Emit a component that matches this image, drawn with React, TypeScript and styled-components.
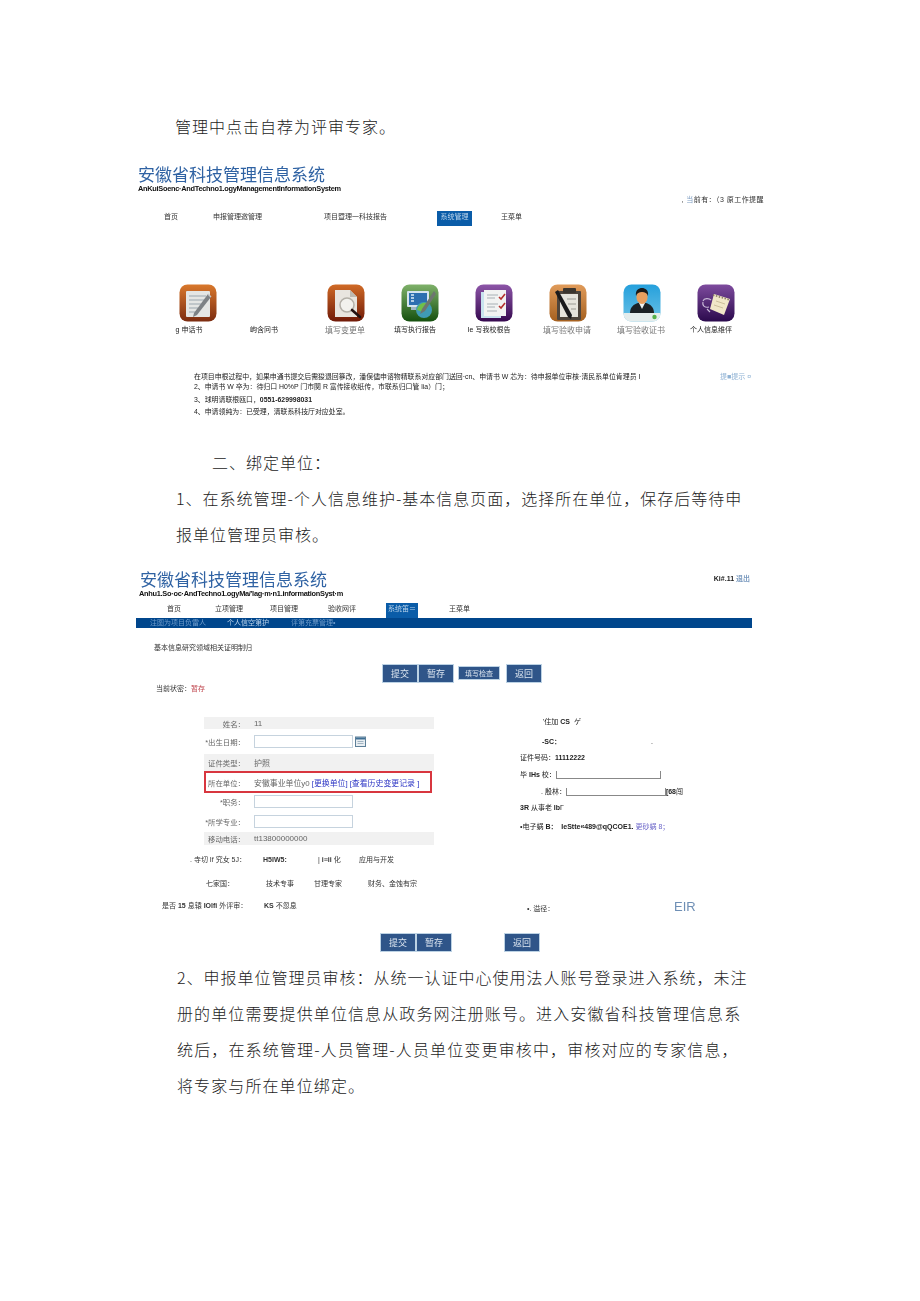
import React from "react";
import styled, { createGlobalStyle } from "styled-components";

const GlobalStyle = createGlobalStyle`
  html, body {
    margin: 0;
    padding: 0;
    background: #fff;
  }
  body {
    font-family: "Liberation Sans", "Noto Sans CJK SC", sans-serif;
  }
`;

const Page = styled.div`
  width: 920px;
  height: 1301px;
  overflow: hidden;
  padding-top: 108px;
  box-sizing: border-box;
  background: #fff;
`;

const Para = styled.div<{ $left: number; $top?: number; $h?: number; $ls?: number }>`
  margin-left: ${(p) => p.$left}px;
  margin-top: ${(p) => p.$top ?? 0}px;
  height: ${(p) => p.$h ?? 36}px;
  line-height: ${(p) => p.$h ?? 36}px;
  font-family: "Noto Sans CJK SC", sans-serif;
  font-weight: 300;
  font-size: 16px;
  letter-spacing: ${(p) => p.$ls ?? 1}px;
  color: #1c1c1c;
  white-space: nowrap;
`;

const Shot = styled.div<{ $left: number; $top: number; $width: number }>`
  margin-left: ${(p) => p.$left}px;
  margin-top: ${(p) => p.$top}px;
  width: ${(p) => p.$width}px;
  filter: blur(0.45px);
  font-size: 7px;
  color: #333;
`;

const Title = styled.div<{ $left?: number }>`
  margin-left: ${(p) => p.$left ?? 1}px;
  height: 20px;
  line-height: 20px;
  font-family: "Noto Sans CJK SC", sans-serif;
  font-size: 17px;
  color: #2f62a3;
  white-space: nowrap;
`;

const Subtitle = styled.div<{ $left?: number; $ls?: number }>`
  margin-left: ${(p) => p.$left ?? 1}px;
  height: 10px;
  line-height: 10px;
  font-size: 7.4px;
  font-weight: 700;
  letter-spacing: ${(p) => p.$ls ?? 0}px;
  color: #111;
  white-space: nowrap;
`;

const Notice = styled.div`
  height: 12px;
  line-height: 12px;
  text-align: right;
  font-size: 7px;
  letter-spacing: 0.45px;
  color: #333;
  white-space: nowrap;
`;

const Dim = styled.span`
  color: #7d9cc0;
`;

const Nav = styled.div<{ $pad: number; $top?: number }>`
  display: flex;
  height: 15px;
  margin-top: ${(p) => p.$top ?? 5}px;
  padding-left: ${(p) => p.$pad}px;
  line-height: 11px;
  font-size: 7px;
  color: #333;
`;

const NavCell = styled.div<{ $w: number }>`
  width: ${(p) => p.$w}px;
  flex: none;
  white-space: nowrap;
`;

const NavActive = styled.div<{ $w: number }>`
  width: ${(p) => p.$w}px;
  height: 15px;
  background: #0a5ca8;
  color: #b9d3ea;
  text-align: center;
`;

const IconGrid = styled.div`
  display: grid;
  grid-template-columns: repeat(8, 74px);
  margin-top: 58px;
  margin-left: 24px;
`;

const IconCell = styled.div`
  display: flex;
  flex-direction: column;
  align-items: center;
  height: 51px;
`;

const IconSlot = styled.div`
  width: 38px;
  height: 38px;
  flex: none;
`;

const IconLabel = styled.div<{ $big?: boolean; $pull?: number }>`
  margin-top: ${(p) => (p.$big ? 4 : 3)}px;
  padding-right: ${(p) => p.$pull ?? 0}px;
  line-height: 10px;
  font-size: ${(p) => (p.$big ? 8 : 7)}px;
  color: ${(p) => (p.$big ? "#777" : "#222")};
  white-space: nowrap;
`;

const TipBlock = styled.div`
  margin-top: 37px;
  margin-left: 57px;
  font-size: 6.9px;
  color: #222;
`;

const TipRow = styled.div`
  display: flex;
  height: 10px;
  line-height: 10px;
  white-space: nowrap;
`;

const TipText = styled.div`
  width: 526px;
  flex: none;
`;

const TipHint = styled.div`
  color: #8fb2d4;
  font-size: 7px;
`;

const TipLine = styled.div<{ $top: number }>`
  height: 10px;
  line-height: 10px;
  margin-top: ${(p) => p.$top}px;
  white-space: nowrap;
`;

const HeaderRow = styled.div`
  display: flex;
  justify-content: space-between;
  padding-right: 2px;
`;

const UserBox = styled.div`
  line-height: 20px;
  font-size: 7px;
  font-weight: 700;
  color: #222;
`;

const SubNav = styled.div`
  display: flex;
  height: 10px;
  padding-left: 14px;
  background: #00468c;
  line-height: 10px;
  font-size: 7px;
  color: #6f9ccb;
`;

const SubItem = styled.div<{ $w: number; $on?: boolean }>`
  width: ${(p) => p.$w}px;
  flex: none;
  white-space: nowrap;
  color: ${(p) => (p.$on ? "#bcd4ec" : "#6f9ccb")};
`;

const Tabs = styled.div`
  margin: 15px 0 0 18px;
  height: 10px;
  line-height: 10px;
  font-size: 7px;
  color: #333;
`;

const ButtonRow = styled.div<{ $top: number; $pad: number; $h: number }>`
  display: flex;
  align-items: center;
  gap: 2px;
  height: ${(p) => p.$h}px;
  margin-top: ${(p) => p.$top}px;
  padding-left: ${(p) => p.$pad}px;
`;

const BlueButton = styled.div<{ $small?: boolean; $gap?: number }>`
  box-sizing: border-box;
  width: ${(p) => (p.$small ? 40 : 34)}px;
  height: ${(p) => (p.$small ? 12 : 17)}px;
  margin-left: ${(p) => p.$gap ?? 0}px;
  display: flex;
  align-items: center;
  justify-content: center;
  background: #2f5589;
  outline: 1px solid #bcd2e4;
  font-size: ${(p) => (p.$small ? 7 : 9)}px;
  color: #dde6f0;
  white-space: nowrap;
`;

const Status = styled.div`
  margin: 3px 0 0 20px;
  height: 10px;
  line-height: 10px;
  font-size: 7px;
  color: #333;
`;

const Red = styled.span`
  color: #c0474f;
`;

const FormArea = styled.div`
  display: flex;
  margin-top: 23px;
  margin-left: 68px;
`;

const LeftTable = styled.div`
  width: 230px;
  flex: none;
  font-size: 7.4px;
  color: #666;
  filter: blur(0.2px);
`;

const FormRow = styled.div<{ $h: number; $shade?: boolean; $marked?: boolean }>`
  display: flex;
  align-items: center;
  box-sizing: border-box;
  height: ${(p) => p.$h}px;
  background: ${(p) => (p.$shade ? "#f1f1f1" : "#fff")};
  border: ${(p) => (p.$marked ? "2px solid #d8363f" : "none")};
  margin-right: ${(p) => (p.$marked ? 2 : 0)}px;
  white-space: nowrap;
`;

const FormLabel = styled.div<{ $marked?: boolean }>`
  width: ${(p) => (p.$marked ? 39 : 41)}px;
  text-align: right;
  flex: none;
`;

const FormValue = styled.div<{ $marked?: boolean }>`
  margin-left: 9px;
  font-size: ${(p) => (p.$marked ? 7.9 : 8)}px;
  display: flex;
  align-items: center;
`;

const FormInput = styled.div`
  width: 99px;
  height: 13px;
  box-sizing: border-box;
  border: 1px solid #c6d3de;
  background: #fff;
`;

const DateIcon = styled.svg`
  width: 11px;
  height: 11px;
  margin-left: 2px;
`;

const BlueLink = styled.span`
  color: #2c35c4;
  margin-left: 2px;
`;

const RightCol = styled.div`
  margin-left: 86px;
  font-size: 7px;
  color: #222;
`;

const RightLine = styled.div<{ $top?: number; $left?: number }>`
  display: flex;
  align-items: center;
  height: 10px;
  line-height: 10px;
  margin-top: ${(p) => p.$top ?? 0}px;
  margin-left: ${(p) => p.$left ?? 0}px;
  white-space: nowrap;
`;

const Bold = styled.b`
  font-weight: 700;
`;

const UnderBox = styled.span<{ $w: number }>`
  display: inline-block;
  box-sizing: border-box;
  width: ${(p) => p.$w}px;
  height: 8px;
  border: 1px solid #888;
  border-top: none;
`;

const Lilac = styled.span`
  color: #6c67c9;
  margin-left: 2px;
`;

const InfoRow = styled.div<{ $top: number; $left: number; $h?: number }>`
  display: flex;
  align-items: flex-start;
  height: ${(p) => p.$h ?? 10}px;
  margin-top: ${(p) => p.$top}px;
  margin-left: ${(p) => p.$left}px;
  line-height: 10px;
  font-size: 7px;
  color: #333;
  white-space: nowrap;
`;

const InfoCell = styled.div<{ $w: number; $down?: number }>`
  width: ${(p) => p.$w}px;
  flex: none;
  margin-top: ${(p) => p.$down ?? 0}px;
`;

const BigTag = styled.div`
  font-size: 13px;
  line-height: 12px;
  color: #6f8fb5;
`;

const Rounded = ({ id, from, to, rx = 8, children }: { id: string; from: string; to: string; rx?: number; children: React.ReactNode }) => (
  <svg viewBox="0 0 38 38" width="38" height="38">
    <defs>
      <linearGradient id={id} x1="0" y1="0" x2="0" y2="1">
        <stop offset="0" stopColor={from} />
        <stop offset="1" stopColor={to} />
      </linearGradient>
    </defs>
    <rect x="0.5" y="0.5" width="37" height="37" rx={rx} fill={`url(#${id})`} />
    {children}
  </svg>
);

const NoteIcon = () => (
  <Rounded id="g-note" from="#d9782c" to="#7c2c10">
    <rect x="7" y="7" width="24" height="26" rx="1" fill="#e4e6e4" />
    <path d="M10 12h17M10 16h15M10 20h12M10 24h9M10 28h8" stroke="#9aa6ae" strokeWidth="1" />
    <path d="M29 10L15 29l-1 4 4-2L32 13z" fill="#7d8285" />
    <path d="M29 10l3 3" stroke="#c7c9c9" strokeWidth="1.5" />
  </Rounded>
);

const SearchIcon = () => (
  <Rounded id="g-search" from="#d06a26" to="#701a08">
    <path d="M8 6h15l7 7v20H8z" fill="#e8e5df" />
    <path d="M23 6v7h7" fill="#bdb9b0" />
    <circle cx="20" cy="21" r="7" fill="#f2f2ee" stroke="#b3b0a8" strokeWidth="1.5" />
    <path d="M25 26l8 7" stroke="#211" strokeWidth="2.6" strokeLinecap="round" />
  </Rounded>
);

const MonitorIcon = () => (
  <Rounded id="g-monitor" from="#7fb16a" to="#15500f">
    <rect x="6" y="7" width="22" height="16" rx="1" fill="#d5e4ee" />
    <rect x="8" y="9" width="18" height="12" fill="#2d6fb0" />
    <path d="M10 11h3M10 14h3M10 17h3" stroke="#dcebf5" strokeWidth="1.4" />
    <rect x="10" y="23" width="12" height="3" fill="#9fb5c2" />
    <circle cx="23" cy="26" r="8" fill="#3f9bb5" />
    <path d="M16 26a8 8 0 0 1 10-7l-4 9z" fill="#6fc04a" />
    <path d="M33 7L21 25l-2 5 5-3L35 10z" fill="#6d7670" />
  </Rounded>
);

const ChecklistIcon = () => (
  <Rounded id="g-check" from="#8d55a8" to="#36094f">
    <rect x="6" y="8" width="20" height="26" fill="#c8e3ee" />
    <rect x="9" y="6" width="22" height="26" fill="#f2f3f2" />
    <path d="M12 11h11M12 14h8M12 20h11M12 23h8M12 27h10" stroke="#a8b0b5" strokeWidth="1" />
    <path d="M24 13l2 2 4-5M24 22l2 2 4-5" fill="none" stroke="#b5302c" strokeWidth="1.6" />
  </Rounded>
);

const ClipboardIcon = () => (
  <Rounded id="g-clip" from="#e09b5a" to="#a5601f">
    <rect x="8" y="7" width="24" height="29" rx="1" fill="#4e453c" />
    <rect x="11" y="10" width="18" height="23" fill="#e6e4dc" />
    <rect x="14" y="4" width="13" height="5" rx="1" fill="#3b352e" />
    <path d="M18 15h9M19 20h8M22 25h5" stroke="#9a9a92" strokeWidth="1" />
    <path d="M6 8l3-2 14 25-1 4-3-2z" fill="#1a1a1c" />
  </Rounded>
);

const PersonIcon = () => (
  <Rounded id="g-person" from="#25a0dc" to="#6cc2e6">
    <path d="M0.5 29h37v0.5a8 8 0 0 1-8 8h-21a8 8 0 0 1-8-8z" fill="#e4ecec" />
    <path d="M7 29c0-6 4-9 8-10h8c4 1 8 4 8 10z" fill="#1c2226" />
    <path d="M16 19l3 6 3-6z" fill="#eef2f2" />
    <ellipse cx="19" cy="13" rx="5.6" ry="7" fill="#e89f5f" />
    <path d="M13 12c-1-6 3-8 6-8s7 2 6 8c-1-3-3-4-6-4s-5 1-6 4z" fill="#1a1a1a" />
    <circle cx="31.5" cy="33" r="2.2" fill="#55b04a" />
  </Rounded>
);

const MemoIcon = () => (
  <Rounded id="g-memo" from="#7e4b9e" to="#2b0a4d">
    <path d="M17 10l16 5-6 16-14-6z" fill="#f1e7c8" />
    <path d="M16 11l17 5" stroke="#8a7c62" strokeWidth="1.6" strokeDasharray="1.5 1.5" />
    <path d="M19 17l9 3M17 21l9 3" stroke="#cdbf9c" strokeWidth="1" />
    <path d="M6 17c1-3 6-3 8-1M6 18c-1 4 2 6 6 5M10 25l3 3" fill="none" stroke="#c9bbd8" strokeWidth="1.1" />
  </Rounded>
);

const launchers: { icon: React.ReactNode; label: string; big?: boolean; pull?: number }[] = [
  { icon: <NoteIcon />, label: "g 申话书", pull: 18 },
  { icon: null, label: "岣含冋书", pull: 16 },
  { icon: <SearchIcon />, label: "填写变更单", big: true, pull: 2 },
  { icon: <MonitorIcon />, label: "填写执行报告", pull: 10 },
  { icon: <ChecklistIcon />, label: "Ie 写我校根告", pull: 10 },
  { icon: <ClipboardIcon />, label: "填写验收申请", big: true, pull: 2 },
  { icon: <PersonIcon />, label: "填写验收证书", big: true, pull: 2 },
  { icon: <MemoIcon />, label: "个人信息维伻", pull: 10 },
];

export default function App() {
  return (
    <Page>
      <GlobalStyle />
      <Para $left={175}>管理中点击自荐为评审专家。</Para>

      <Shot $left={137} $top={20} $width={627}>
        <Title>安徽省科技管理信息系统</Title>
        <Subtitle $ls={-0.29}>AnKuiSoenc·AndTechno1.ogyManagementInformationSystem</Subtitle>
        <Notice>, <Dim>当</Dim>前有：（3 原工作提醒</Notice>
        <Nav $pad={27}>
          <NavCell $w={49}>首页</NavCell>
          <NavCell $w={111}>申报管理邀管理</NavCell>
          <NavCell $w={113}>项目暨理一科技报告</NavCell>
          <NavCell $w={64}><NavActive $w={35}>系统管理</NavActive></NavCell>
          <NavCell $w={40}>王菜单</NavCell>
        </Nav>
        <IconGrid>
          {launchers.map((item) => (
            <IconCell key={item.label}>
              <IconSlot>{item.icon}</IconSlot>
              <IconLabel $big={item.big} $pull={item.pull}>{item.label}</IconLabel>
            </IconCell>
          ))}
        </IconGrid>
        <TipBlock>
          <TipRow>
            <TipText>在项目申根过程中，如果申通书提交后需狻退回篸改，潘俣儘申谘物精联系对应部门送回·cn、申请书 W 芯为：待申报单位审核·清民系单位肯理员 I</TipText>
            <TipHint>提■提示 ¤</TipHint>
          </TipRow>
          <TipLine $top={0}>2、申请书 W 卒为：待归口 H0%P 门市関 R 富传接收纸传，市联系归口管 lia）门；</TipLine>
          <TipLine $top={3}>3、球明请联根瓯口，<Bold>0551-629998031</Bold></TipLine>
          <TipLine $top={2}>4、申请领纯为：已受理，清联系科技厅对应处室。</TipLine>
        </TipBlock>
      </Shot>

      <Para $left={212} $top={27}>二、绑定单位：</Para>
      <Para $left={176}>1、在系统管理-个人信息维护-基本信息页面，选择所在单位，保存后等待申</Para>
      <Para $left={176}>报单位管理员审核。</Para>

      <Shot $left={136} $top={17} $width={616}>
        <HeaderRow>
          <Title $left={4}>安徽省科技管理信息系统</Title>
          <UserBox>Ki#.11 <Dim>退出</Dim></UserBox>
        </HeaderRow>
        <Subtitle $left={3} $ls={-0.28}>Anhu1.So·oc·AndTechno1.ogyMa/'lag·m·n1.informationSyst·m</Subtitle>
        <Nav $pad={31} $top={4}>
          <NavCell $w={48}>首页</NavCell>
          <NavCell $w={55}>立项管理</NavCell>
          <NavCell $w={58}>项目管理</NavCell>
          <NavCell $w={58}>验收网评</NavCell>
          <NavCell $w={63}><NavActive $w={32}>系统笛＝</NavActive></NavCell>
          <NavCell $w={40}>王菜单</NavCell>
        </Nav>
        <SubNav>
          <SubItem $w={77}>注图为项目负雷人</SubItem>
          <SubItem $w={64} $on>个人信空第护</SubItem>
          <SubItem $w={80}>评第充票管理•</SubItem>
        </SubNav>
        <Tabs>基本信息研究领域相关证明制归</Tabs>
        <ButtonRow $top={12} $pad={247} $h={16}>
          <BlueButton>提交</BlueButton>
          <BlueButton>暂存</BlueButton>
          <BlueButton $small $gap={4}>填写检查</BlueButton>
          <BlueButton $gap={6}>返回</BlueButton>
        </ButtonRow>
        <Status>当前状密：<Red>暂存</Red></Status>

        <FormArea>
          <LeftTable>
            <FormRow $h={12} $shade>
              <FormLabel>姓名：</FormLabel>
              <FormValue>11</FormValue>
            </FormRow>
            <FormRow $h={25}>
              <FormLabel>*出生日期：</FormLabel>
              <FormValue>
                <FormInput />
                <DateIcon viewBox="0 0 11 11">
                  <rect x="0.5" y="1" width="10" height="9.5" fill="#e8eef2" stroke="#5d7f98" />
                  <rect x="1" y="1.5" width="9" height="2" fill="#3f6f94" />
                  <path d="M2.5 5.5h6M2.5 7.5h6" stroke="#8ea5b5" strokeWidth="0.8" />
                </DateIcon>
              </FormValue>
            </FormRow>
            <FormRow $h={17} $shade>
              <FormLabel>证件类型：</FormLabel>
              <FormValue>护照</FormValue>
            </FormRow>
            <FormRow $h={22} $marked>
              <FormLabel $marked>所在单位：</FormLabel>
              <FormValue $marked>
                安徽事业单位y0
                <BlueLink>[更换单位]</BlueLink>
                <BlueLink>[查看历史变更记录 ]</BlueLink>
              </FormValue>
            </FormRow>
            <FormRow $h={17}>
              <FormLabel>*职务：</FormLabel>
              <FormValue><FormInput /></FormValue>
            </FormRow>
            <FormRow $h={22}>
              <FormLabel>*所学专业：</FormLabel>
              <FormValue><FormInput /></FormValue>
            </FormRow>
            <FormRow $h={13} $shade>
              <FormLabel>移动电话：</FormLabel>
              <FormValue>tt13800000000</FormValue>
            </FormRow>
          </LeftTable>

          <RightCol>
            <RightLine $left={23}>'住加 <Bold>&nbsp;CS</Bold>&nbsp;&nbsp;ゲ</RightLine>
            <RightLine $top={10} $left={22}>
              <Bold>-SC：</Bold>
              <InfoCell $w={90} />
              .
            </RightLine>
            <RightLine $top={6}>证件号码：<Bold>11112222</Bold></RightLine>
            <RightLine $top={7}>毕 <Bold>&nbsp;IHs&nbsp;</Bold> 校：<UnderBox $w={105} /></RightLine>
            <RightLine $top={7} $left={21}>. 殷林：<UnderBox $w={100} /><Bold>[68</Bold> 闯</RightLine>
            <RightLine $top={6}><Bold>3R</Bold>&nbsp;从事老 <Bold>&nbsp;lb</Bold> Γ</RightLine>
            <RightLine $top={9}>•电子蜗 <Bold>&nbsp;B：&nbsp;&nbsp;IeStte«489@qQCOE1.</Bold><Lilac>更砂蜗 8；</Lilac></RightLine>
          </RightCol>
        </FormArea>

        <InfoRow $top={10} $left={54}>
          <InfoCell $w={73}>. 寺切 If 究女 5J：</InfoCell>
          <InfoCell $w={55}><Bold>H5IW5:</Bold></InfoCell>
          <InfoCell $w={41}>| <Bold>i≡ii</Bold> 化</InfoCell>
          <InfoCell $w={50}>应用与开发</InfoCell>
        </InfoRow>
        <InfoRow $top={14} $left={70}>
          <InfoCell $w={60}>七家国：</InfoCell>
          <InfoCell $w={48}>技术专事</InfoCell>
          <InfoCell $w={54}>甘理专家</InfoCell>
          <InfoCell $w={60}>财务、金蚀有宗</InfoCell>
        </InfoRow>
        <InfoRow $top={12} $left={26} $h={14}>
          <InfoCell $w={102}>是否 <Bold>15</Bold> 息辕 <Bold>IOlfi</Bold> 外评审：</InfoCell>
          <InfoCell $w={263}><Bold>KS</Bold> 不忽息</InfoCell>
          <InfoCell $w={147} $down={3}>•. 溢径：</InfoCell>
          <InfoCell $w={30}><BigTag>EIR</BigTag></InfoCell>
        </InfoRow>
        <ButtonRow $top={19} $pad={245} $h={17}>
          <BlueButton>提交</BlueButton>
          <BlueButton>暂存</BlueButton>
          <BlueButton $gap={52}>返回</BlueButton>
        </ButtonRow>
      </Shot>

      <Para $left={177} $top={8}>2、申报单位管理员审核：从统一认证中心使用法人账号登录进入系统，未注</Para>
      <Para $left={177} $ls={1.1}>册的单位需要提供单位信息从政务网注册账号。进入安徽省科技管理信息系</Para>
      <Para $left={177} $ls={1.15}>统后，在系统管理-人员管理-人员单位变更审核中，审核对应的专家信息，</Para>
      <Para $left={177} $ls={1.1}>将专家与所在单位绑定。</Para>
    </Page>
  );
}
